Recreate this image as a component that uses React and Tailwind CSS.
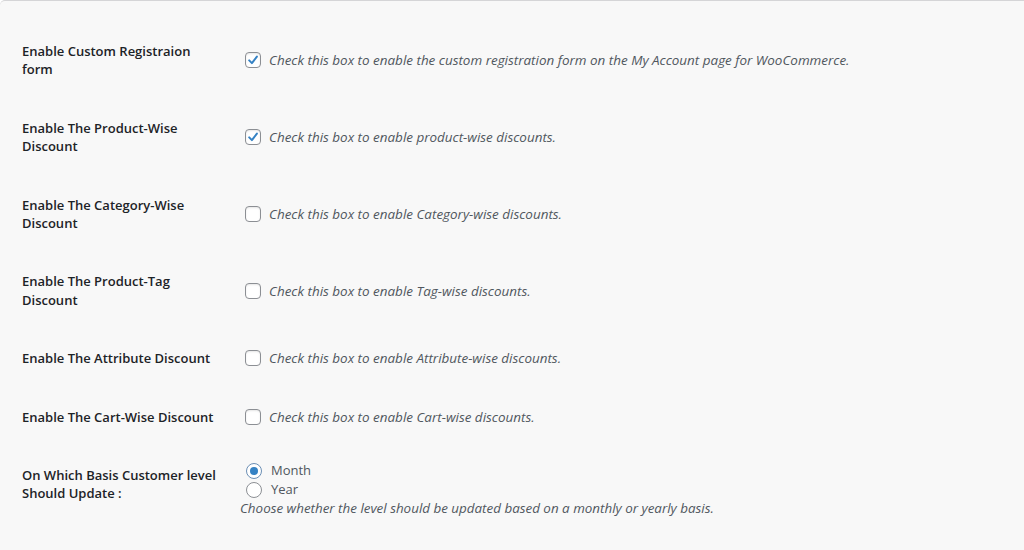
const settings = [
  {
    label: "Enable Custom Registraion form",
    desc: "Check this box to enable the custom registration form on the My Account page for WooCommerce.",
    checked: true,
  },
  {
    label: "Enable The Product-Wise Discount",
    desc: "Check this box to enable product-wise discounts.",
    checked: true,
  },
  {
    label: "Enable The Category-Wise Discount",
    desc: "Check this box to enable Category-wise discounts.",
    checked: false,
  },
  {
    label: "Enable The Product-Tag Discount",
    desc: "Check this box to enable Tag-wise discounts.",
    checked: false,
  },
  {
    label: "Enable The Attribute Discount",
    desc: "Check this box to enable Attribute-wise discounts.",
    checked: false,
  },
  {
    label: "Enable The Cart-Wise Discount",
    desc: "Check this box to enable Cart-wise discounts.",
    checked: false,
  },
];

const Checkbox = ({ checked }) => (
  <span className="w-4 h-4 shrink-0 rounded-[4px] border border-[#8c8f94] bg-white shadow-[inset_0_1px_2px_rgba(0,0,0,0.1)] flex items-center justify-center">
    {checked && (
      <svg width="14" height="14" viewBox="0 0 14 14">
        <path
          d="M3.2 7.4 L5.9 10.1 L10.9 3.6"
          fill="none"
          stroke="#3582c4"
          strokeWidth="2"
          strokeLinecap="round"
          strokeLinejoin="round"
        />
      </svg>
    )}
  </span>
);

const Radio = ({ checked, label }) => (
  <label className="flex items-center gap-[9px] ml-[6px] h-[19px] text-[#50575e] text-[13px]">
    <span
      className={`w-4 h-4 rounded-full border bg-white flex items-center justify-center ${
        checked ? "border-[#6c8fb5]" : "border-[#8c8f94]"
      }`}
    >
      {checked && <span className="w-2 h-2 rounded-full bg-[#3582c4]" />}
    </span>
    {label}
  </label>
);

const SettingRow = ({ label, children }) => (
  <div className="flex items-center">
    <div className="self-start w-[208px] shrink-0 pr-[10px] py-5 text-[13px] leading-[18.4px] font-semibold text-[#1d2327]">
      {label}
    </div>
    <div className="flex-1 px-[10px] py-[15px]">{children}</div>
  </div>
);

export default function App() {
  return (
    <div
      className="min-h-[550px] bg-[#f8f8f8] border-t border-[#d5d5d7] rounded-tl-[5px] pt-[21px] px-[22px]"
      style={{ fontFamily: '"Segoe UI", "Open Sans", sans-serif' }}
    >
      {settings.map((s) => (
        <SettingRow key={s.label} label={s.label}>
          <label className="flex items-center gap-2 ml-[5px] leading-[18.5px]">
            <Checkbox checked={s.checked} />
            <span className="italic text-[13.45px] text-[#50575e]">{s.desc}</span>
          </label>
        </SettingRow>
      ))}
      <SettingRow label="On Which Basis Customer level Should Update :">
        <div className="leading-[19px]">
          <Radio checked label="Month" />
          <Radio label="Year" />
          <p className="italic text-[13.4px] text-[#50575e] h-[19px]">
            Choose whether the level should be updated based on a monthly or yearly basis.
          </p>
        </div>
      </SettingRow>
    </div>
  );
}
